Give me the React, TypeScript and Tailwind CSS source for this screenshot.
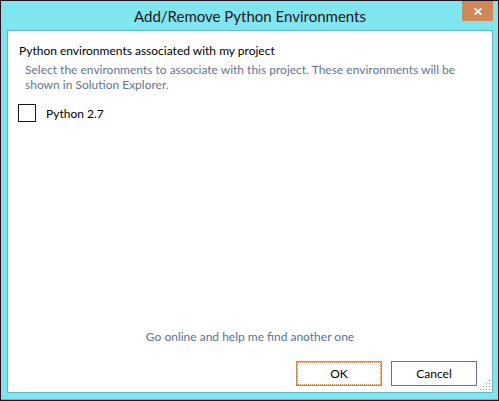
import { useState } from "react";

const gripDots = [
  [9, 0],
  [6, 3],
  [9, 3],
  [3, 6],
  [6, 6],
  [9, 6],
  [0, 9],
  [3, 9],
  [6, 9],
  [9, 9],
];

function ResizeGrip() {
  return (
    <svg
      aria-hidden="true"
      viewBox="0 0 10 10"
      shapeRendering="crispEdges"
      className="absolute right-0.5 bottom-0.5 size-2.5"
    >
      {gripDots.map(([x, y]) => (
        <rect key={`${x}-${y}`} x={x} y={y} width="1" height="1" fill="#5fb3bf" />
      ))}
    </svg>
  );
}

function TitleBar() {
  return (
    <header className="grid h-[29px] grid-cols-[31px_1fr_31px] items-start">
      <h1 className="col-start-2 pt-1 text-center text-[15px] leading-[22px] whitespace-nowrap text-[#1f1420]">
        Add/Remove Python Environments
      </h1>
      <button
        type="button"
        aria-label="Close"
        className="flex h-5 items-center justify-center bg-[#cf8855]"
      >
        <svg viewBox="0 0 8 7" className="h-[7px] w-2" fill="none" stroke="#fff" strokeWidth="1.8">
          <path d="M0.6 0.3 L7.4 6.7 M7.4 0.3 L0.6 6.7" />
        </svg>
      </button>
    </header>
  );
}

export default function App() {
  const [checked, setChecked] = useState(false);

  return (
    <div className="flex min-h-screen flex-col border border-[#1f1420] bg-[#7fe6ef] pr-[5px] pb-[7px] pl-1.5 font-['Lato','Open_Sans',sans-serif] text-[12px] leading-[15px] text-black shadow-[inset_0_-1px_0_#62b8c6]">
      <TitleBar />
      <main className="relative flex flex-1 flex-col border border-[#62b8c6] bg-white px-2.5 pt-3 pb-1.5">
        <h2 className="pl-px">Python environments associated with my project</h2>
        <p className="mt-1 pr-5 pl-[7px] text-[#647590]">
          Select the environments to associate with this project. These environments will be shown
          in Solution Explorer.
        </p>
        <label className="mt-3 flex items-center gap-2.5 self-start">
          <input
            type="checkbox"
            checked={checked}
            onChange={(e) => setChecked(e.target.checked)}
            className="size-[18px] appearance-none border border-[#1f1420] bg-white checked:bg-[#1f1420]"
          />
          Python 2.7
        </label>
        <div className="flex-1" />
        <a href="#online" className="self-center text-[#587296]">
          Go online and help me find another one
        </a>
        <div className="mt-[17px] flex justify-end gap-[9px] pr-[5px]">
          <button
            type="button"
            className="h-[25px] w-[86px] border border-[#cf8855] bg-white outline-1 -outline-offset-2 outline-dotted outline-[#cf8855]"
          >
            OK
          </button>
          <button type="button" className="h-[25px] w-[86px] border border-[#6f6c94] bg-white">
            Cancel
          </button>
        </div>
        <ResizeGrip />
      </main>
    </div>
  );
}
